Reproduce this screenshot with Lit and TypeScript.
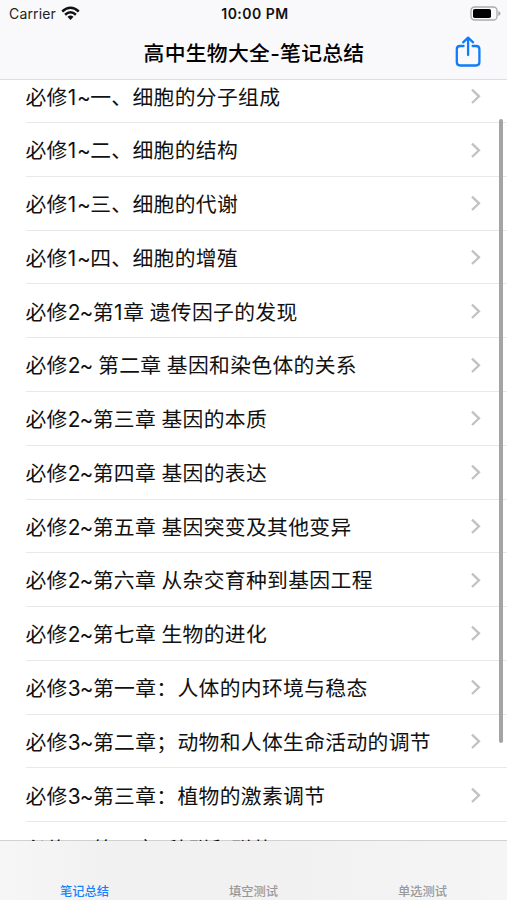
import { LitElement, html, css } from "lit";
import { customElement, property } from "lit/decorators.js";
import { classMap } from "lit/directives/class-map.js";

const CHAPTERS = [
  "必修1~一、细胞的分子组成",
  "必修1~二、细胞的结构",
  "必修1~三、细胞的代谢",
  "必修1~四、细胞的增殖",
  "必修2~第1章 遗传因子的发现",
  "必修2~ 第二章 基因和染色体的关系",
  "必修2~第三章 基因的本质",
  "必修2~第四章 基因的表达",
  "必修2~第五章 基因突变及其他变异",
  "必修2~第六章 从杂交育种到基因工程",
  "必修2~第七章 生物的进化",
  "必修3~第一章：人体的内环境与稳态",
  "必修3~第二章；动物和人体生命活动的调节",
  "必修3~第三章：植物的激素调节",
  "必修3~第四章  种群和群落",
];

const TABS = ["笔记总结", "填空测试", "单选测试"];

@customElement("chapter-row")
class ChapterRow extends LitElement {
  @property() label = "";

  static styles = css`
    :host {
      display: flex;
      flex: none;
      box-sizing: border-box;
      height: 53.77px;
      margin-left: 26px;
      padding-right: 25px;
      align-items: center;
      justify-content: space-between;
      border-bottom: 1px solid #e8e8e9;
    }
    .label {
      margin-left: -0.6px;
      padding-top: 3.6px;
      font-size: 20.8px;
      letter-spacing: 0.33px;
      line-height: 30px;
      white-space: pre;
      color: #111;
    }
    .one {
      letter-spacing: 0.8px;
    }
    .digit {
      letter-spacing: -0.9px;
    }
    .mark {
      letter-spacing: -0.5px;
    }
    .chevron {
      display: block;
      width: 12px;
      height: 18px;
    }
  `;

  private part(text: string) {
    if (!/^[\d~ ]$/.test(text)) return text;
    const classes = { one: text === "1", digit: /[2-9]/.test(text), mark: /[~ ]/.test(text) };
    return html`<span class=${classMap(classes)}>${text}</span>`;
  }

  render() {
    const parts = this.label.split(/([\d~ ])/).filter(Boolean);
    return html`
      <span class="label">${parts.map((p) => this.part(p))}</span>
      <svg class="chevron" viewBox="0 0 12 18" fill="none" stroke="#c2c2c5" stroke-width="2.3">
        <path d="M2 2.6 9 9.3 2 16" />
      </svg>
    `;
  }
}

@customElement("app-root")
class AppRoot extends LitElement {
  static styles = css`
    :host {
      display: flex;
      flex-direction: column;
      position: relative;
      box-sizing: border-box;
      width: 507px;
      height: 900px;
      overflow: hidden;
      background: #fff;
      font-family: Inter, "Noto Sans CJK SC", sans-serif;
    }
    .header {
      flex: none;
      box-sizing: border-box;
      height: 80px;
      background: #f9f9fb;
      border-bottom: 1px solid #dededf;
    }
    .status {
      display: grid;
      grid-template-columns: 1fr auto 1fr;
      align-items: center;
      height: 27px;
      padding: 0 6px 0 9px;
      font-size: 14px;
      line-height: 27px;
      color: #222;
    }
    .carrier {
      display: flex;
      align-items: center;
      gap: 5.5px;
      letter-spacing: 0.15px;
    }
    .carrier svg {
      margin-bottom: 1px;
    }
    .time {
      font-size: 14px;
      font-weight: 600;
      letter-spacing: 0.5px;
      color: #111;
    }
    .battery {
      justify-self: end;
      margin-bottom: 1px;
    }
    .nav {
      display: grid;
      grid-template-columns: 1fr auto 1fr;
      align-items: center;
      height: 52px;
      padding: 0 25px 0 26px;
    }
    .title {
      grid-column: 2;
      padding-top: 1px;
      font-size: 20.8px;
      font-weight: 500;
      letter-spacing: 0.3px;
      line-height: 30px;
      color: #000;
    }
    .share {
      justify-self: end;
      margin-bottom: 3px;
    }
    svg {
      display: block;
    }
    .list {
      flex: 1;
      min-height: 0;
      display: flex;
      flex-direction: column;
      overflow: hidden;
      margin-bottom: -1px;
    }
    .rows {
      display: flex;
      flex-direction: column;
      margin-top: -10.6px;
    }
    .scrollbar {
      position: absolute;
      right: 4px;
      top: 119px;
      width: 4px;
      height: 624px;
      border-radius: 2px;
      background: #a4a4a5;
    }
    .tabs {
      flex: none;
      box-sizing: border-box;
      display: grid;
      grid-template-columns: repeat(3, 1fr);
      align-items: end;
      height: 60px;
      border-top: 1px solid rgba(0, 0, 0, 0.18);
      background: linear-gradient(90deg, #f6f6f6, #f1f1f2 22%, #f1f1f2 55%, #f6f5f6);
      background-clip: padding-box;
    }
    .tab {
      font-size: 12.3px;
      font-weight: 500;
      line-height: 17px;
      text-align: center;
      color: #999;
    }
    .active {
      color: #1683fb;
    }
  `;

  render() {
    return html`
      <header class="header">
        <div class="status">
          <div class="carrier">
            <span>Carrier</span>
            <svg width="19" height="15" viewBox="0 0 19 15" fill="none" stroke="#111" stroke-width="2.5">
              <path d="M1.2 5.5Q9.5-2 17.8 5.5" />
              <path d="M4.1 8.7Q9.5 3.8 14.9 8.7" />
              <path d="M6.5 10.8Q9.5 8.2 12.5 10.8L9.5 14Z" fill="#111" stroke="none" />
            </svg>
          </div>
          <div class="time">10:00 PM</div>
          <svg class="battery" width="31" height="15" viewBox="0 0 31 15">
            <rect x="1" y="1" width="26" height="13" rx="3.6" fill="none" stroke="#aaa" stroke-width="1.3" />
            <rect x="3" y="3" width="18" height="9" rx="1.8" fill="#000" />
            <path d="M28.3 5Q30.6 5.6 30.6 7.5T28.3 10Z" fill="#aaa" />
          </svg>
        </div>
        <div class="nav">
          <div class="title">高中生物大全-笔记总结</div>
          <svg class="share" width="27" height="32" viewBox="0 0 27 32" fill="none" stroke="#117cf9" stroke-width="2.3" stroke-linecap="round" stroke-linejoin="round">
            <path d="M8.6 10H5.2Q1.8 10 1.8 13.2V26.3Q1.8 29.5 5.2 29.5H21Q24.4 29.5 24.4 26.3V13.2Q24.4 10 21 10H17.6" />
            <path d="M13.1 19V2M8.1 6.3 13.1 1.6 18.1 6.3" />
          </svg>
        </div>
      </header>
      <main class="list">
        <div class="rows">
          ${CHAPTERS.map((c) => html`<chapter-row .label=${c}></chapter-row>`)}
        </div>
      </main>
      <div class="scrollbar"></div>
      <nav class="tabs">
        ${TABS.map((t, i) => html`<div class="tab ${i === 0 ? "active" : ""}">${t}</div>`)}
      </nav>
    `;
  }
}
